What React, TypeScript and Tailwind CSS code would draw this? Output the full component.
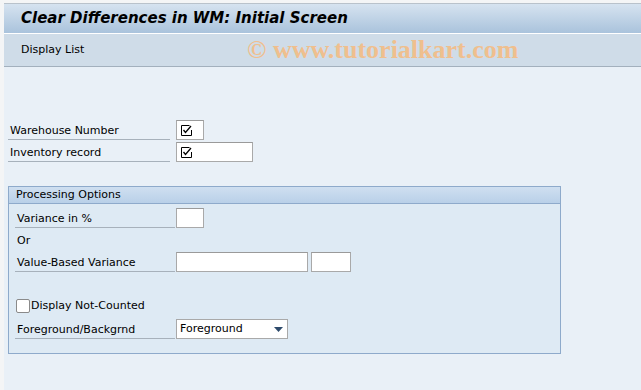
import React from 'react';

const font = { fontFamily: 'Tahoma, "DejaVu Sans", sans-serif' };

function CheckGlyph() {
  return (
    <svg width="11" height="11" viewBox="0 0 11 11" className="block">
      <path d="M8.5 0.5 H0.5 V10.5 H10.5 V5" fill="none" stroke="#000" strokeWidth="1" />
      <path d="M2.5 5 L4.5 7.5 L10 1" fill="none" stroke="#000" strokeWidth="1.3" />
    </svg>
  );
}

function Field({ w, children }: { w: string; children?: React.ReactNode }) {
  return (
    <div className={`${w} h-[20px] bg-white border border-[#a9a9a9] border-t-[#9a9a9a] flex items-center pl-[4px]`}>
      {children}
    </div>
  );
}

function Label({ text, w }: { text: string; w: string }) {
  return (
    <div className={`${w} h-[20px] border-b border-[#a7b1bb] flex items-end pb-[3px] pl-[2px] text-[11px] text-black leading-none`}>
      {text}
    </div>
  );
}

export default function App() {
  return (
    <div className="w-[641px] h-[390px] bg-[#f4f5f6] pt-[3px] pl-[4px] overflow-hidden" style={font}>
      <div className="h-full bg-[#e9f0f7] border-t border-[#b9c2cb]">
        {/* title */}
        <div className="h-[30px] bg-gradient-to-b from-[#d6e3f0] to-[#aac3dc] border-b border-white flex items-center pl-[17px]">
          <span className="text-[15px] font-bold italic text-black">
            Clear Differences in WM: Initial Screen
          </span>
        </div>
        {/* toolbar */}
        <div className="h-[33px] bg-[#cfdce8] border-b border-[#a3b0bd] flex items-center pl-[17px] relative">
          <span className="text-[11px] text-black">Display List</span>
          <span
            className="absolute left-[243px] top-[1px] text-[26px] leading-[30px] font-bold text-[#efbf8e]"
            style={{ fontFamily: '"Liberation Serif", serif' }}
          >
            © www.tutorialkart.com
          </span>
        </div>

        {/* selection fields */}
        <div className="pt-[53px] pl-[4px] flex flex-col gap-[2px]">
          <div className="flex items-center">
            <Label text="Warehouse Number" w="w-[162px]" />
            <div className="ml-[6px]">
              <Field w="w-[28px]"><CheckGlyph /></Field>
            </div>
          </div>
          <div className="flex items-center">
            <Label text="Inventory record" w="w-[162px]" />
            <div className="ml-[6px]">
              <Field w="w-[77px]"><CheckGlyph /></Field>
            </div>
          </div>
        </div>

        {/* group box */}
        <div className="ml-[4px] mt-[24px] w-[553px] h-[168px] border border-[#8eaacb] bg-[#deeaf4]">
          <div className="h-[17px] bg-gradient-to-b from-[#cfdff0] to-[#b9d0e8] border-b border-[#8eaacb] flex items-center pl-[7px] text-[11px] text-black">
            Processing Options
          </div>
          <div className="pl-[6px] pt-[3px] flex flex-col">
            <div className="flex items-center h-[22px]">
              <Label text="Variance in %" w="w-[160px]" />
              <div className="ml-[1px]">
                <Field w="w-[28px]" />
              </div>
            </div>
            <div className="h-[22px] flex items-center pl-[2px] text-[11px] text-black pt-[2px]">Or</div>
            <div className="flex items-center h-[22px]">
              <Label text="Value-Based Variance" w="w-[160px]" />
              <div className="ml-[1px] flex gap-[3px]">
                <Field w="w-[132px]" />
                <Field w="w-[40px]" />
              </div>
            </div>
            <div className="h-[22px]" />
            <div className="flex items-center h-[22px] pl-[1px]">
              <div className="w-[14px] h-[14px] bg-white border border-[#8a8a8a] rounded-[2px]" />
              <span className="ml-[1px] text-[11px] text-black">Display Not-Counted</span>
            </div>
            <div className="flex items-center h-[22px] mt-[1px]">
              <Label text="Foreground/Backgrnd" w="w-[160px]" />
              <div className="ml-[1px]">
                <div className="w-[112px] h-[20px] bg-white border border-[#a9a9a9] flex items-center justify-between pl-[3px] pr-[4px] text-[11px] text-black">
                  <span>Foreground</span>
                  <svg width="9" height="5" viewBox="0 0 9 5">
                    <path d="M0 0 H9 L4.5 5 Z" fill="#2d4a6b" />
                  </svg>
                </div>
              </div>
            </div>
          </div>
        </div>
      </div>
    </div>
  );
}
